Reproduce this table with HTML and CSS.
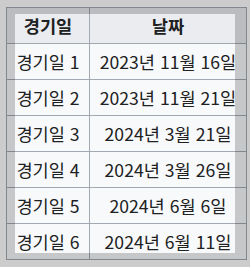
FILE: index.html
```html
<!DOCTYPE html>
<html lang="ko">
<head>
<meta charset="utf-8">
<link rel="stylesheet" href="styles.css">
</head>
<body>
<div class="stage">
  <table class="wikitable">
    <thead>
      <tr><th class="c1">경기일</th><th class="c2">날짜</th></tr>
    </thead>
    <tbody>
      <tr><td>경기일 1</td><td>2023년 11월 16일</td></tr>
      <tr><td>경기일 2</td><td>2023년 11월 21일</td></tr>
      <tr><td>경기일 3</td><td>2024년 3월 21일</td></tr>
      <tr><td>경기일 4</td><td>2024년 3월 26일</td></tr>
      <tr><td>경기일 5</td><td>2024년 6월 6일</td></tr>
      <tr><td>경기일 6</td><td>2024년 6월 11일</td></tr>
    </tbody>
  </table>
  <div class="focus"></div>
</div>
</body>
</html>
```
FILE: styles.css
```css
html, body {
  margin: 0;
  padding: 0;
  background: #ffffff;
  overflow: hidden;
}
.stage {
  position: relative;
  width: 250px;
  height: 267px;
  padding: 7px 0 0 6px;
  box-sizing: border-box;
}
.wikitable {
  border-collapse: collapse;
  border: 1px solid #a2a9b1;
  font-family: "Noto Sans CJK KR", "Noto Sans", sans-serif;
  font-size: 17.6px;
  color: #202122;
  background: #f8f9fa;
}
.wikitable th,
.wikitable td {
  border: 1px solid #a2a9b1;
  padding: 0 4px;
  height: 35px;
  text-align: center;
  white-space: nowrap;
  line-height: 20px;
}
.wikitable th {
  background: #eaecf0;
  font-weight: bold;
}
.c1 { width: 74px; }
.c2 { width: 148px; }
.focus {
  position: absolute;
  left: 15px;
  top: 14px;
  width: 220px;
  height: 239px;
  box-shadow: 0 0 0 400px rgba(0, 0, 0, 0.2);
  pointer-events: none;
}
```
